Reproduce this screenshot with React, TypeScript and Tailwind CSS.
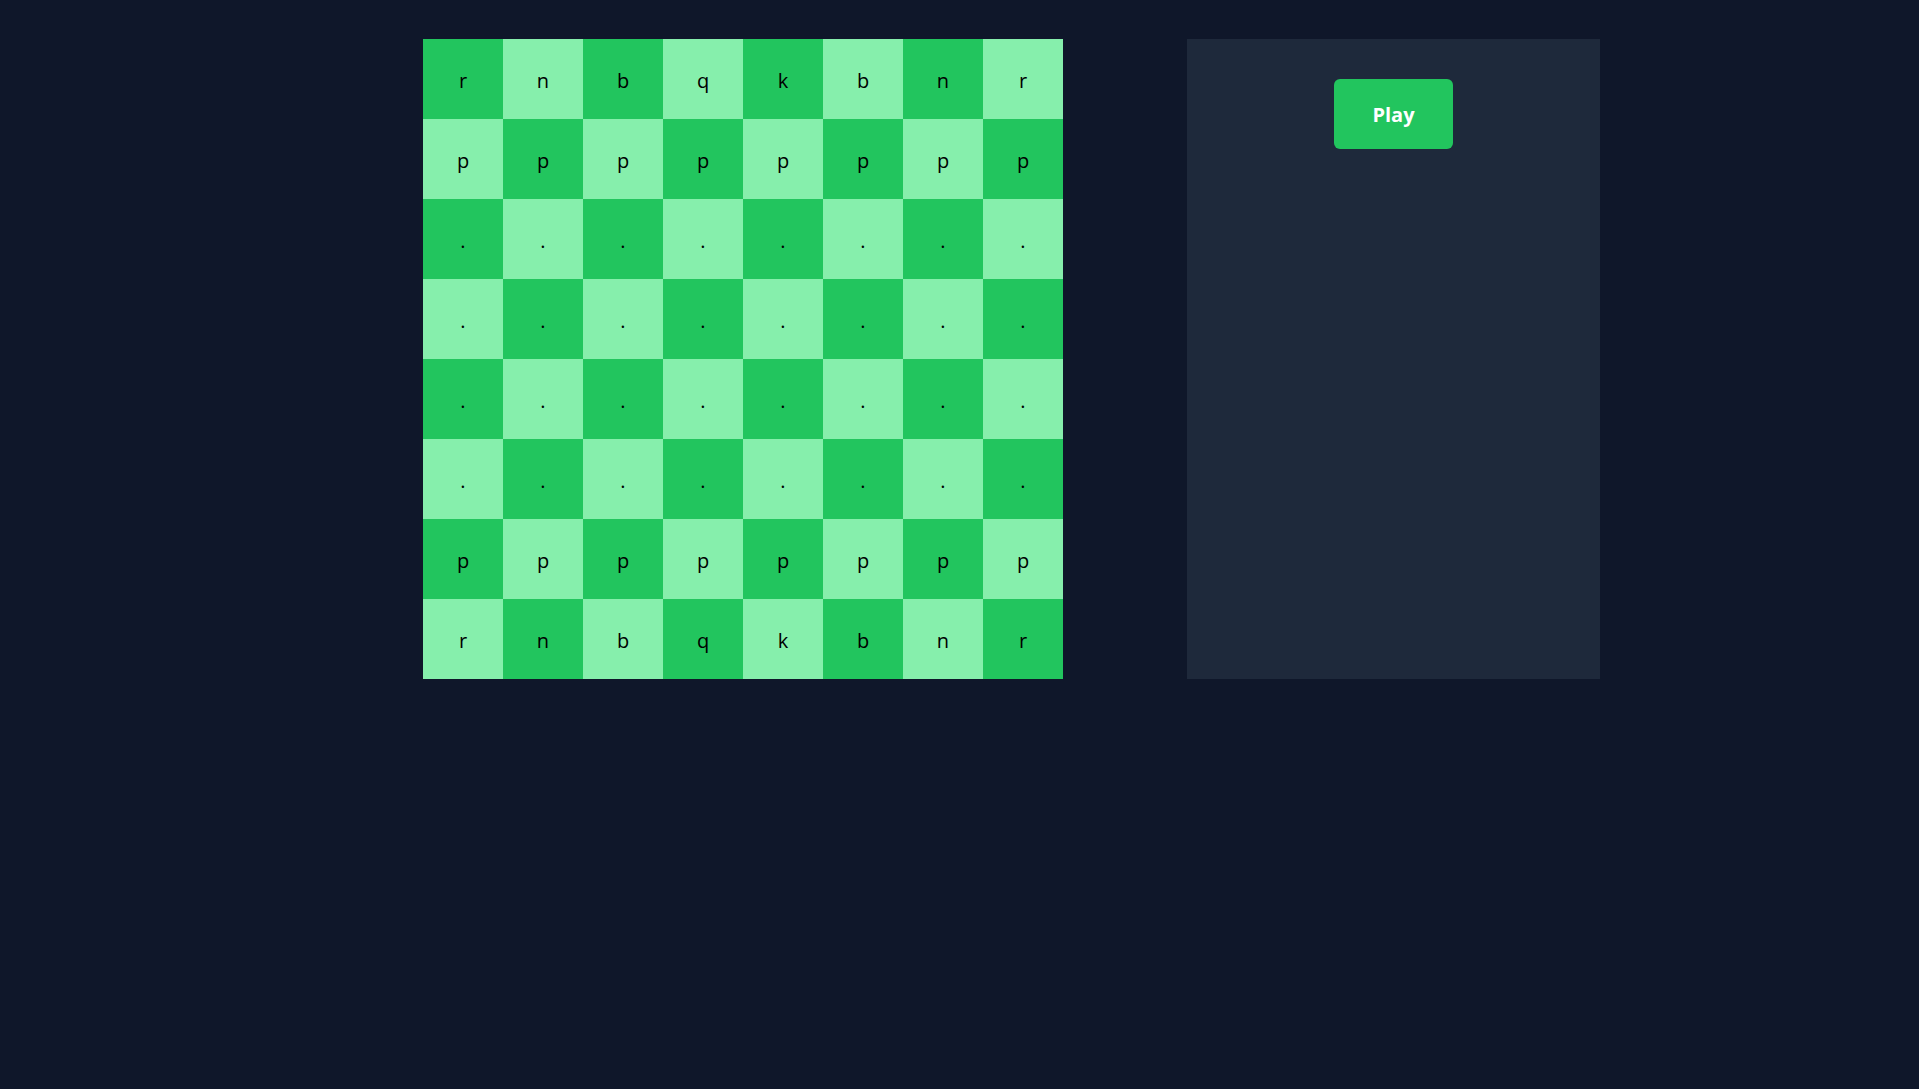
const backRank = ['r', 'n', 'b', 'q', 'k', 'b', 'n', 'r'];

function pieceAt(row: number, col: number): string {
  if (row === 0 || row === 7) return backRank[col];
  if (row === 1 || row === 6) return 'p';
  return '.';
}

function ChessBoard() {
  const rows = Array.from({ length: 8 }, (_, i) => i);
  return (
    <div className="flex flex-col">
      {rows.map((row) => (
        <div key={row} className="flex">
          {rows.map((col) => {
            const dark = (row + col) % 2 === 0;
            return (
              <div
                key={col}
                className={
                  dark
                    ? 'w-20 h-20 bg-[#22c55e] flex items-center justify-center pt-[3px] text-black text-xl'
                    : 'w-20 h-20 bg-[#86efac] flex items-center justify-center pt-[3px] text-black text-xl'
                }
              >
                {pieceAt(row, col)}
              </div>
            );
          })}
        </div>
      ))}
    </div>
  );
}

export default function App() {
  return (
    <div
      className="min-h-screen bg-[#0f172a]"
      style={{ fontFamily: '"Open Sans", "Noto Sans", sans-serif' }}
    >
      <div className="flex items-start pl-[423px] pt-[39px] gap-[124px]">
        <ChessBoard />
        <div className="w-[413px] h-[640px] bg-[#1e293b] flex justify-center pt-10">
          <button className="w-[119px] h-[70px] bg-[#22c55e] rounded-md text-white text-xl font-bold flex items-center justify-center pt-[2px]">
            Play
          </button>
        </div>
      </div>
    </div>
  );
}
